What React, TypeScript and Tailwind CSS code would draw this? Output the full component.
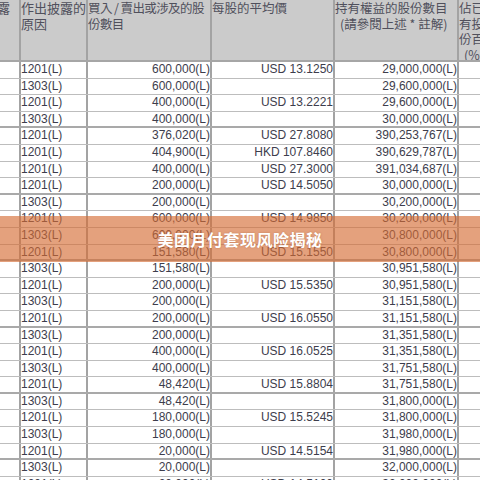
import React from 'react';

type Row = { reason: string; qty: string; price: string; held: string };

const rows: Row[] = [
  { reason: '1201(L)', qty: '600,000(L)', price: 'USD 13.1250', held: '29,000,000(L)' },
  { reason: '1303(L)', qty: '600,000(L)', price: '', held: '29,600,000(L)' },
  { reason: '1201(L)', qty: '400,000(L)', price: 'USD 13.2221', held: '29,600,000(L)' },
  { reason: '1303(L)', qty: '400,000(L)', price: '', held: '30,000,000(L)' },
  { reason: '1201(L)', qty: '376,020(L)', price: 'USD 27.8080', held: '390,253,767(L)' },
  { reason: '1201(L)', qty: '404,900(L)', price: 'HKD 107.8460', held: '390,629,787(L)' },
  { reason: '1201(L)', qty: '400,000(L)', price: 'USD 27.3000', held: '391,034,687(L)' },
  { reason: '1201(L)', qty: '200,000(L)', price: 'USD 14.5050', held: '30,000,000(L)' },
  { reason: '1303(L)', qty: '200,000(L)', price: '', held: '30,200,000(L)' },
  { reason: '1201(L)', qty: '600,000(L)', price: 'USD 14.9850', held: '30,200,000(L)' },
  { reason: '1303(L)', qty: '600,000(L)', price: '', held: '30,800,000(L)' },
  { reason: '1201(L)', qty: '151,580(L)', price: 'USD 15.1550', held: '30,800,000(L)' },
  { reason: '1303(L)', qty: '151,580(L)', price: '', held: '30,951,580(L)' },
  { reason: '1201(L)', qty: '200,000(L)', price: 'USD 15.5350', held: '30,951,580(L)' },
  { reason: '1303(L)', qty: '200,000(L)', price: '', held: '31,151,580(L)' },
  { reason: '1201(L)', qty: '200,000(L)', price: 'USD 16.0550', held: '31,151,580(L)' },
  { reason: '1303(L)', qty: '200,000(L)', price: '', held: '31,351,580(L)' },
  { reason: '1201(L)', qty: '400,000(L)', price: 'USD 16.0525', held: '31,351,580(L)' },
  { reason: '1303(L)', qty: '400,000(L)', price: '', held: '31,751,580(L)' },
  { reason: '1201(L)', qty: '48,420(L)', price: 'USD 15.8804', held: '31,751,580(L)' },
  { reason: '1303(L)', qty: '48,420(L)', price: '', held: '31,800,000(L)' },
  { reason: '1201(L)', qty: '180,000(L)', price: 'USD 15.5245', held: '31,800,000(L)' },
  { reason: '1303(L)', qty: '180,000(L)', price: '', held: '31,980,000(L)' },
  { reason: '1201(L)', qty: '20,000(L)', price: 'USD 14.5154', held: '31,980,000(L)' },
  { reason: '1303(L)', qty: '20,000(L)', price: '', held: '32,000,000(L)' },
  { reason: '1201(L)', qty: '20,000(L)', price: 'USD 14.5100', held: '32,000,000(L)' },
];

const cjk = "font-['Noto_Sans_CJK_TC','Noto_Sans_CJK_SC',sans-serif]";
const line = 'border-r-2 border-[#a3a3a3]';

export default function App() {
  return (
    <div className="relative w-[480px] h-[480px] overflow-hidden bg-white">
      {/* header */}
      <div className={`flex h-[62px] bg-[#cbcbcb] border-b-2 border-[#a6a6a6] text-[12.5px] leading-[16px] text-[#50505c] ${cjk}`}>
        <div className={`w-[21px] shrink-0 overflow-hidden ${line}`}>
          <span className="block -ml-[3px] text-[13px]">露</span>
        </div>
        <div className={`w-[67px] shrink-0 overflow-hidden text-[13px] ${line}`}>
          作出披露的<br />原因
        </div>
        <div className={`w-[124px] shrink-0 overflow-hidden whitespace-nowrap tracking-[-0.6px] ${line}`}>
          買入 / 賣出或涉及的股<br />份數目
        </div>
        <div className={`w-[123px] shrink-0 overflow-hidden whitespace-nowrap ${line}`}>
          每股的平均價
        </div>
        <div className={`w-[124px] shrink-0 overflow-hidden whitespace-nowrap ${line}`}>
          持有權益的股份數目
          <br />
          <span className="pl-[5px]">(請參閱上述 * 註解)</span>
        </div>
        <div className="flex-1 overflow-hidden whitespace-nowrap leading-[15.5px]">
          佔已發<br />有投票<br />份百分<br />
          <span className="pl-[5px]">(%)</span>
        </div>
      </div>

      {/* rows */}
      <div className="font-['Liberation_Sans',Arial,sans-serif] text-[12px] text-[#3d3d4c]">
        {rows.map((r, i) => (
          <div
            key={i}
            className={`flex h-[16.6px] leading-[15px] ${
              (i + 1) % 4 === 0 ? 'border-b-2 border-[#a9a9a9]' : 'border-b border-[#bdbdbd]'
            }`}
          >
            <div className={`w-[21px] shrink-0 ${line}`} />
            <div className={`w-[67px] shrink-0 whitespace-nowrap ${line}`}>{r.reason}</div>
            <div className={`w-[124px] shrink-0 text-right whitespace-nowrap ${line}`}>{r.qty}</div>
            <div className={`w-[123px] shrink-0 text-right whitespace-nowrap ${line}`}>{r.price}</div>
            <div className={`w-[124px] shrink-0 text-right whitespace-nowrap ${line}`}>{r.held}</div>
            <div className="flex-1" />
          </div>
        ))}
      </div>

      {/* title banner */}
      <div className="absolute left-0 right-0 top-[216px] h-[46px] flex items-center justify-center bg-[rgba(212,108,52,0.64)]">
        <span className="text-white font-bold text-[16px] tracking-[0.5px] font-['Noto_Sans_CJK_SC',sans-serif] [text-shadow:0_0_2px_rgba(120,50,10,0.35)]">
          美团月付套现风险揭秘
        </span>
      </div>
    </div>
  );
}
